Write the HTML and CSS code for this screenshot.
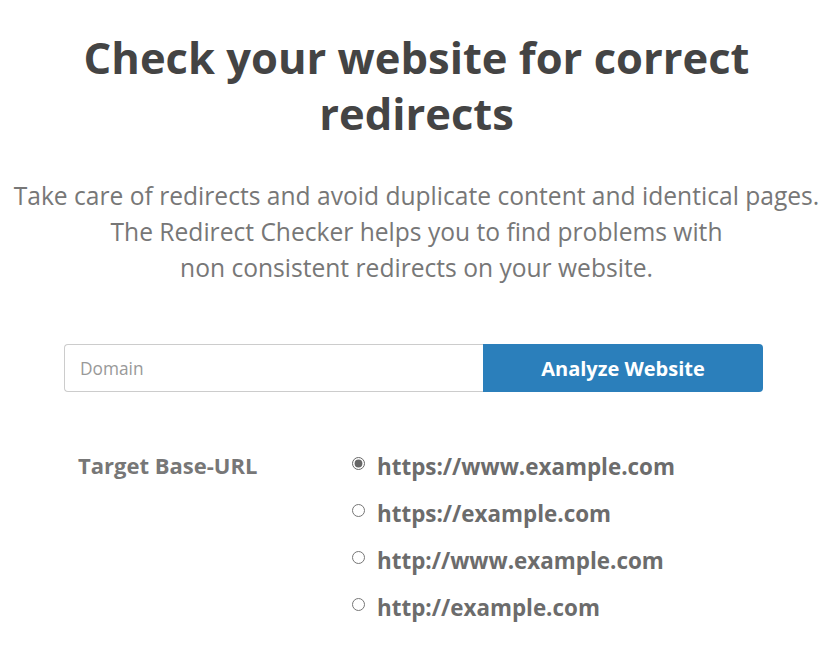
FILE: index.html
```html
<!DOCTYPE html>
<html>
<head>
<meta charset="utf-8">
<link rel="stylesheet" href="styles.css">
</head>
<body>
<div class="page">
  <h1 class="title">Check your website for correct redirects</h1>
  <p class="lead">Take care of redirects and avoid duplicate content and identical pages.<br>The Redirect Checker helps you to find problems with<br>non consistent redirects on your website.</p>
  <form class="search">
    <input class="domain" type="text" placeholder="Domain">
    <button class="analyze" type="button">Analyze Website</button>
  </form>
  <div class="target">
    <div class="target-label">Target Base-URL</div>
    <div class="options">
      <label class="option"><input type="radio" name="base" checked><span>https://www.example.com</span></label>
      <label class="option"><input type="radio" name="base"><span>https://example.com</span></label>
      <label class="option"><input type="radio" name="base"><span>http://www.example.com</span></label>
      <label class="option"><input type="radio" name="base"><span>http://example.com</span></label>
    </div>
  </div>
</div>
</body>
</html>
```
FILE: styles.css
```css
html, body {
  margin: 0;
  padding: 0;
  background: #fff;
}
body {
  font-family: "Open Sans", "Noto Sans", sans-serif;
}
.page {
  width: 833px;
  padding-top: 30px;
}
.title {
  margin: 0 auto;
  width: 720px;
  text-align: center;
  font-size: 43.5px;
  line-height: 56px;
  font-weight: 700;
  color: #444;
}
.lead {
  margin: 36px 0 0;
  text-align: center;
  font-size: 24.6px;
  line-height: 36px;
  color: #777;
}
.search {
  display: flex;
  margin: 58px 0 0 64px;
  width: 699px;
  height: 48px;
}
.domain {
  box-sizing: border-box;
  width: 419px;
  height: 48px;
  margin: 0;
  padding: 0 15px;
  border: 1px solid #ccc;
  border-right: none;
  border-radius: 4px 0 0 4px;
  font-family: "Open Sans", sans-serif;
  font-size: 17.3px;
  color: #555;
  outline: none;
}
.domain::placeholder {
  color: #999;
}
.analyze {
  flex: 1;
  height: 48px;
  margin: 0;
  border: none;
  border-radius: 0 4px 4px 0;
  background: #2b7fbb;
  color: #fff;
  font-family: "Open Sans", sans-serif;
  font-weight: 700;
  font-size: 20px;
}
.target {
  display: flex;
  margin: 60px 0 0 78px;
}
.target-label {
  width: 274px;
  font-size: 22px;
  font-weight: 700;
  color: #777;
  line-height: 26px;
}
.options {
  display: flex;
  flex-direction: column;
  gap: 18px;
}
.option {
  display: flex;
  align-items: center;
  height: 29px;
  font-size: 22.4px;
  font-weight: 700;
  color: #6c6c6c;
}
.option input {
  margin: 0 12px 6px 0;
  width: 13px;
  height: 13px;
  accent-color: #666;
}
```
